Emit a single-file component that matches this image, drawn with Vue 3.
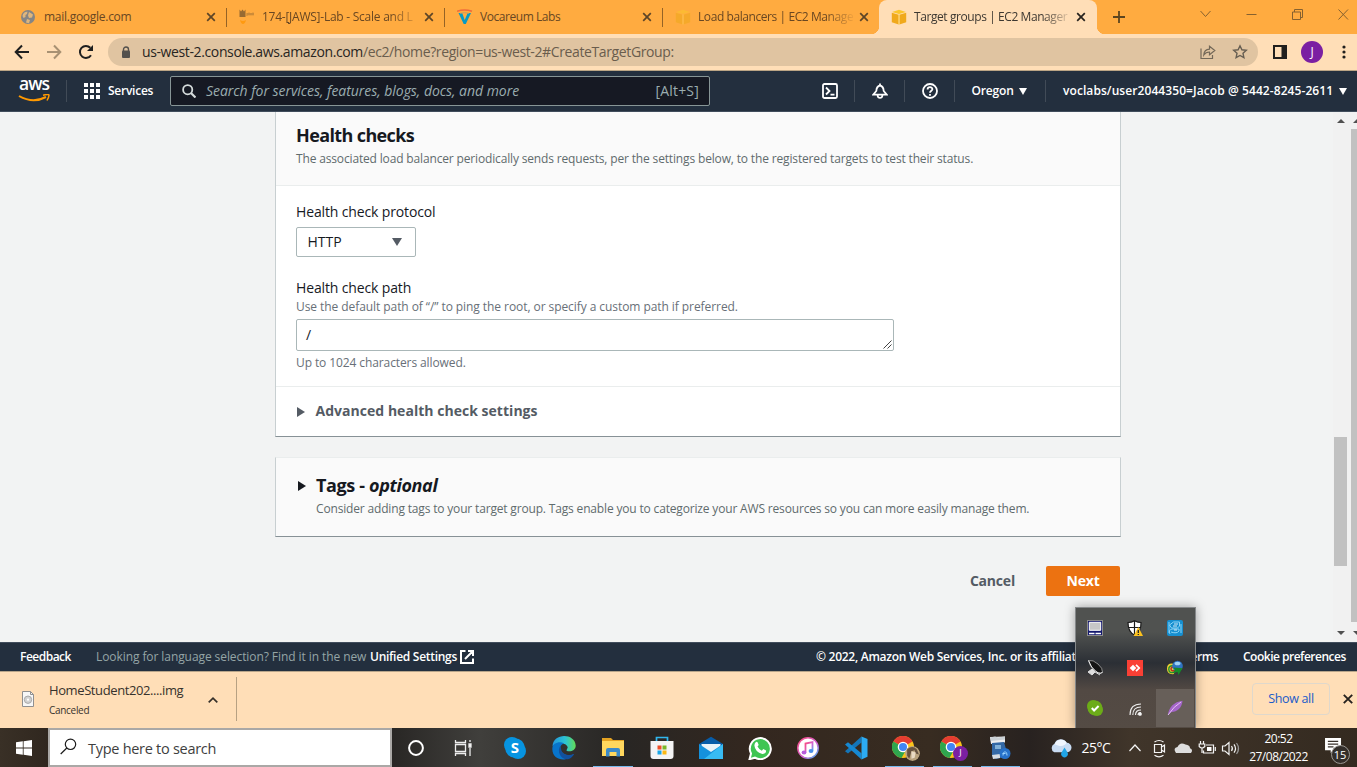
<script setup>
const tabs = [
  { kind: 'globe', title: 'mail.google.com', cls: 't1' },
  { kind: 'canvas', title: '174-[JAWS]-Lab - Scale and L', cls: 't2' },
  { kind: 'voc', title: 'Vocareum Labs', cls: 't3' },
  { kind: 'cube', title: 'Load balancers | EC2 Manage', cls: 't4' },
  { kind: 'cube', title: 'Target groups | EC2 Manager', cls: 't5' },
]
</script>

<template>
  <div class="screen">
    <header class="tabs">
      <div v-for="(t, i) in tabs" :key="i" class="tab" :class="[t.cls, { active: i === 4 }]">
        <svg v-if="t.kind === 'globe'" class="fav" viewBox="0 0 16 16"><circle cx="7" cy="8" r="7" fill="#858585" /><path d="M1.500 7C2 3.500 4.500 2.500 6.500 2.800L6 5 4.500 6V8L2.500 9zM8 3l4 2.500-1 3-3 .5-1-2.500zM6 10l3 1-1 3.200-3-.7z" fill="#e0b67c" /></svg>
        <svg v-else-if="t.kind === 'canvas'" class="fav" viewBox="0 0 16 16"><path d="M.5.500l1.500 2L3.500.500 5 2.500 6.500.500V8H.5z" fill="#7d5a2e" opacity=".8" /><path d="M8 4v3M10 3.500v3M12 4v2.500M14 3.500v3M8 5h7" stroke="#8f6530" stroke-width="1" opacity=".6" /><path d="M1 11q3 2 6 0-1 4-3 4t-3-4z" fill="#ff9a10" /></svg>
        <svg v-else-if="t.kind === 'voc'" class="fav" viewBox="0 0 16 16"><path d="M1.500 4h3.700l2.500 7L10.700 4H14L8.800 15H6.700z" fill="#079ac4" /><path d="M0 2.300Q7.500-.3 15 2.300" fill="none" stroke="#f06a3b" stroke-width="1.500" /><path d="M3 4.300Q7.500 3 12 4.300" stroke="#cf9a5a" stroke-width="1" fill="none" /></svg>
        <svg v-else class="fav" viewBox="0 0 16 16"><path d="M8 .8L15 3 8 5 1 3z" fill="#fbc52b" /><path d="M.8 3.700L7.700 5.700V15.500L.8 13.200zM8.400 5.700L15.200 3.700V13.200L8.400 15.500z" fill="#f0a91c" /><path d="M8 5.500v10" stroke="#ffd76c" stroke-width=".9" /></svg>
        <span class="title">{{ t.title }}</span>
        <svg class="x" viewBox="0 0 10 10"><path d="M1.200 1.200l7.600 7.600M8.800 1.200L1.200 8.800" stroke="currentColor" stroke-width="1.700" /></svg>
      </div>
      <svg class="plus" viewBox="0 0 12 12"><path d="M6 0v12M0 6h12" stroke="#5c451f" stroke-width="1.800" /></svg>
      <svg class="win" viewBox="0 0 150 14" fill="none" stroke="#86612f" stroke-width="1"><path d="M.5 4l5 5.500 5-5.500M46.500 7.500h10M92.500 5h8v7.500h-8zM94.500 5V2.500h8v8h-2M138.500 2.500l9.500 10M148 2.500L138.500 12.500" /></svg>
    </header>

    <div class="toolbar">
      <svg class="navs" viewBox="0 0 84 20" fill="none" stroke-width="2"><path d="M15 10H2M8 3.500L1.700 10 8 16.500" stroke="#1f1f1f" /><path d="M33 10h13M40 3.500L46.300 10 40 16.500" stroke="#a89173" /><path d="M77 13.200A6 6 0 1 1 76.300 5.800" stroke="#1f1f1f" /><path d="M79 3v6h-6z" fill="#1f1f1f" /></svg>
      <div class="omni">
        <svg class="lock" viewBox="0 0 10 13"><path d="M2.500 5V3.500a2.500 2.500 0 0 1 5 0V5" fill="none" stroke="#54514d" stroke-width="1.400" /><rect x="1" y="4.600" width="8" height="7.400" rx="1" fill="#54514d" /></svg>
        <span class="url"><b>us-west-2.console.aws.amazon.com</b>/ec2/home?region=us-west-2#CreateTargetGroup:</span>
        <svg class="share" viewBox="0 0 16 16" fill="none" stroke="#736858" stroke-width="1.200"><path d="M1 4.500V14.500H12.500V11" /><path d="M3.800 11C4 7 6.500 5.300 9.500 5.200V2.200L14.800 6.500 9.500 10.800V8C7 8 5.200 8.800 3.800 11z" /></svg>
        <svg class="star" viewBox="0 0 16 16"><path d="M8 1.800l1.900 4 4.400.5-3.300 3 .9 4.400L8 11.500l-3.900 2.200.9-4.400-3.300-3 4.400-.5z" fill="none" stroke="#665e52" stroke-width="1.400" /></svg>
      </div>
      <svg class="side" viewBox="0 0 14 14"><path fill-rule="evenodd" d="M0 0h14v14H0zM2 2v10h6.500V2z" fill="#211f1d" /></svg>
      <span class="avatar">J</span>
      <svg class="dots" viewBox="0 0 4 14" fill="#211f1d"><circle cx="2" cy="2" r="1.600" /><circle cx="2" cy="7" r="1.600" /><circle cx="2" cy="12" r="1.600" /></svg>
    </div>

    <nav class="aws">
      <div class="awslogo"><span>aws</span><svg viewBox="0 0 32 9"><path d="M1 2Q15 10 28 3" fill="none" stroke="#f90" stroke-width="2" /><path d="M25 1.200Q31-.3 31 1.300T29 6.500" fill="none" stroke="#f90" stroke-width="1.500" /></svg></div>
      <i class="sep s1"></i>
      <svg class="grid" viewBox="0 0 16 16" fill="#fff"><path d="M0 0h4v4H0zM6 0h4v4H6zM12 0h4v4h-4zM0 6h4v4H0zM6 6h4v4H6zM12 6h4v4h-4zM0 12h4v4H0zM6 12h4v4H6zM12 12h4v4h-4z" /></svg>
      <span class="services">Services</span>
      <div class="search">
        <svg viewBox="0 0 14 14" fill="none" stroke="#d5dbdb" stroke-width="1.800"><circle cx="5.700" cy="5.700" r="4.600" /><path d="M9 9l4.500 4.500" stroke-width="2.200" /></svg>
        <em>Search for services, features, blogs, docs, and more</em><span>[Alt+S]</span>
      </div>
      <svg class="shell" viewBox="0 0 16 16" fill="none" stroke="#fff" stroke-width="1.800"><rect x="1" y="1" width="14" height="14" rx="1.500" /><path d="M4 4.500L7.500 8 4 11.500M8.500 11.700h4" /></svg>
      <i class="sep"></i>
      <svg class="bell" viewBox="0 0 16 16" fill="none" stroke="#fff" stroke-width="1.800"><path d="M8 .5v2C5 3 4.500 5 4.300 8L1.200 11.700h13.600L11.700 8C11.500 5 11 3 8 2.500M5.600 12.500c.4 3.200 4.400 3.200 4.800 0" /></svg>
      <i class="sep"></i>
      <svg class="help" viewBox="0 0 16 16" fill="none" stroke="#fff" stroke-width="1.800"><circle cx="8" cy="8" r="7" /><path d="M5.600 6.500c0-3 4.800-3 4.800-.3 0 1.500-2.400 1.500-2.400 3.600M8 11v1.700" /></svg>
      <i class="sep"></i>
      <span class="oregon">Oregon</span><i class="down"></i>
      <i class="sep s5"></i>
      <span class="account">voclabs/user2044350=Jacob @ 5442-8245-2611</span><i class="down d2"></i>
    </nav>

    <main>
      <div class="content">
        <section class="panel health">
          <div class="phead">
            <h2>Health checks</h2>
            <p class="hdesc">The associated load balancer periodically sends requests, per the settings below, to the registered targets to test their status.</p>
          </div>
          <div class="pbody">
            <label class="l1">Health check protocol</label>
            <div class="select"><span>HTTP</span><i></i></div>
            <label class="l2">Health check path</label>
            <p class="hint h1">Use the default path of “/” to ping the root, or specify a custom path if preferred.</p>
            <div class="area"><span>/</span><svg viewBox="0 0 9 9"><path d="M.5 8.500l8-8M4.500 8.500l4-4" stroke="#444" stroke-width="1" /></svg></div>
            <p class="hint h3">Up to 1024 characters allowed.</p>
          </div>
          <div class="adv"><i class="right"></i><b>Advanced health check settings</b></div>
        </section>
        <section class="panel tags">
          <i class="right dark"></i>
          <div><h2>Tags - <em>optional</em></h2><p class="tdesc">Consider adding tags to your target group. Tags enable you to categorize your AWS resources so you can more easily manage them.</p></div>
        </section>
        <div class="actions"><span class="cancel">Cancel</span><span class="next">Next</span></div>
      </div>
      <div class="scroll inner"><i class="up"></i><i class="thumb"></i><i class="dn"></i></div>
      <div class="scroll outer"><i class="up"></i><i class="thumb"></i><i class="dn"></i></div>
    </main>

    <footer class="foot">
      <b class="feedback">Feedback</b>
      <span class="lang">Looking for language selection? Find it in the new</span>
      <b class="unified">Unified Settings</b>
      <svg viewBox="0 0 14 14" fill="none" stroke="#fff" stroke-width="2"><path d="M5.500 1H1v12h12V8.500M8 1h5v5M13 1L5 9" /></svg>
      <span class="copy">© 2022, Amazon Web Services, Inc. or its affiliates.</span>
      <span class="terms">Terms</span>
      <span class="cookie">Cookie preferences</span>
    </footer>

    <div class="downloads">
      <svg class="file" viewBox="0 0 12 16"><path d="M.5.500h8l3 3v12H.5z" fill="#f7f7f7" stroke="#909090" /><path d="M8.500.500v3h3" fill="none" stroke="#909090" /><circle cx="6" cy="8.700" r="3.700" fill="#d2d2d2" stroke="#aaa" /><circle cx="6" cy="8.700" r="1.100" fill="#fff" /></svg>
      <div class="fname"><span>HomeStudent202....img</span><small>Canceled</small></div>
      <svg class="chev" viewBox="0 0 10 6"><path d="M.7 5.300L5 1.200l4.300 4.100" fill="none" stroke="#35302a" stroke-width="1.700" /></svg>
      <i class="dsep"></i>
      <span class="showall">Show all</span>
      <svg class="dx" viewBox="0 0 10 10"><path d="M.8.800l8.400 8.400M9.200.800L.8 9.200" stroke="#26221e" stroke-width="1.900" /></svg>
    </div>

    <div class="taskbar">
      <svg class="start" viewBox="0 0 16 16" fill="#fff"><path d="M0 2.300l6.800-1V7.600H0zM7.600 1.200L16 0v7.600H7.600zM0 8.400h6.800v6.300L0 13.800zM7.600 8.400H16V16l-8.400-1.200z" /></svg>
      <div class="find"><svg viewBox="0 0 17 17" fill="none" stroke="#1b1b1b" stroke-width="1.200"><circle cx="10.500" cy="6.300" r="5.200" /><path d="M6.800 10L.7 16" /></svg><span>Type here to search</span></div>
      <div class="cell c1"><svg viewBox="0 0 24 24"><circle cx="12" cy="12" r="6.900" fill="none" stroke="#fff" stroke-width="2" /></svg></div>
      <div class="cell c2"><svg viewBox="0 0 24 24" fill="none" stroke="#eee" stroke-width="1.300"><path d="M4.500 4v2.500h10V4M4.500 20v-2.500h10V20M4.500 8.500h10v7h-10zM19 4v2M19 12v8" /><path d="M18 8h2v3h-2z" fill="#fff" /></svg></div>
      <div class="cell"><svg viewBox="0 0 24 24"><circle cx="9" cy="9" r="8" fill="#0794e1" /><circle cx="15" cy="15" r="8" fill="#0794e1" /><circle cx="12" cy="12" r="9.800" fill="#0794e1" /><text x="12" y="17.100" text-anchor="middle" fill="#fff" font-size="15" font-weight="700" font-family="Open Sans, sans-serif">S</text></svg></div>
      <div class="cell"><svg viewBox="0 0 24 24"><defs><linearGradient id="eg" x1="0" x2="1"><stop offset="0" stop-color="#2395dc" /><stop offset=".55" stop-color="#2cc3d4" /><stop offset="1" stop-color="#62dc55" /></linearGradient></defs><path d="M.5 10.500C1-3.500 23-3 23.700 9.500c.3 5.500-6.500 7-9.300 5l1.300-3C15 6.500 5 5.500 .5 10.500z" fill="url(#eg)" /><path d="M.3 13C.5 6.500 8 5 12 7.400c-4 1.200-4.500 5-2.500 8.100 3 4.500 8.500 4.500 12.500 2.500C17 26 .5 26 .3 13z" fill="#0874cb" /><path d="M8.500 9.700c-4 5.500 0 14 7.500 13.500 3-.8 4.800-2.800 6-5.200-5 2.400-11.500.2-12.500-3z" fill="#12519e" /></svg></div>
      <div class="cell open"><svg viewBox="0 0 24 24"><path d="M1 2h9l2 2h11v16H1z" fill="#e5a322" /><path d="M1 5h22v15H1z" fill="#ffd75e" /><path d="M5 20.500V14q0-2 2-2h10q2 0 2 2v6.500h-3.500V16h-7v4.500z" fill="#3b8ac9" /></svg></div>
      <div class="cell"><svg viewBox="0 0 24 24"><path d="M6.500 7V1.500h11V7" fill="none" stroke="#31b7ed" stroke-width="1.700" /><path d="M.5 5h23v15q0 3-3 3h-17q-3 0-3-3z" fill="#f4f4f4" /><path d="M7.500 9.500h4v4h-4z" fill="#ef4e27" /><path d="M12.500 9.500h4v4h-4z" fill="#79b729" /><path d="M7.500 14.500h4v4h-4z" fill="#1ba7e7" /><path d="M12.500 14.500h4v4h-4z" fill="#fbb812" /></svg></div>
      <div class="cell"><svg viewBox="0 0 24 24"><path d="M0 8L12 .8 24 8v3H0z" fill="#075ca8" /><path d="M2.500 8h19v8h-19z" fill="#e8f2f8" /><path d="M0 8l12 8 12-8v15H0z" fill="#1591dc" /><path d="M24 8v15H5z" fill="#38bbf3" /></svg></div>
      <div class="cell"><svg viewBox="0 0 24 24"><path d="M1.500 23.200L3 17.500A10.500 10.500 0 1 1 7 21.700z" fill="#3fc553" stroke="#fff" stroke-width="2" /><path d="M7.500 6.500q1.200-1.300 2.200 0l1 2.500-1.200 1.500q1.500 3 4.300 4.200l1.500-1.600 2.800 1.500q0 3.500-3.700 3.300Q7 16 6.400 9.500 6.500 7.500 7.500 6.500" fill="#fff" /></svg></div>
      <div class="cell n"><svg viewBox="0 0 24 24"><defs><linearGradient id="it" x1="0" y1="0" x2="1" y2="1"><stop stop-color="#fc4b7e" /><stop offset=".6" stop-color="#cf64d5" /><stop offset="1" stop-color="#3bb9f2" /></linearGradient></defs><circle cx="12" cy="12" r="10.200" fill="#fff" stroke="url(#it)" stroke-width="1.500" /><path d="M9.500 16.500V7.500l7-1.500v8.700" fill="none" stroke="url(#it)" stroke-width="1.800" /><ellipse cx="8" cy="16.500" rx="2.400" ry="1.900" fill="#b45cdc" /><ellipse cx="15" cy="15" rx="2.400" ry="1.900" fill="#4a8ee8" /></svg></div>
      <div class="cell n"><svg viewBox="0 0 24 24"><path d="M17.500.5v6L4 17.500l-3-2.300z" fill="#1475b8" /><path d="M1 8.500l3-2.300 13.500 11v6.300z" fill="#1688d2" /><path d="M17.500.5l6 2.600v17.700l-6 2.700z" fill="#2cabf2" /></svg></div>
      <div v-for="n in 2" :key="n" class="cell n open chrome"><svg viewBox="0 0 24 24"><circle cx="11" cy="11" r="11" fill="#fbc31b" /><path d="M11 11L1.400 5.500A11 11 0 0 1 20.500 5.500z" fill="#e53d31" /><path d="M11 11L1.400 5.500A11 11 0 0 0 9.500 21.900L14 14z" fill="#2fa64e" /><circle cx="11" cy="11" r="5.300" fill="#fff" /><circle cx="11" cy="11" r="4" fill="#4285f4" /></svg><span v-if="n === 2" class="badge">J</span><svg v-else class="badge face" viewBox="0 0 14 14"><circle cx="7" cy="7" r="7" fill="#b9a27e" /><path d="M2 3Q7-1 11 3l2 5-3-1-1-3-3 1-2 7-2-3z" fill="#665240" /><path d="M6 5l4 1-1 5-3 1z" fill="#eadac4" /></svg></div>
      <div class="cell n open"><svg viewBox="0 0 24 24"><path d="M2 1l15-.5v6L3 8z" fill="#eee" /><path d="M2 1.500l5-1 3 1 7-1v3L3 5z" fill="#cbd1d6" /><path d="M4 7l12-1 4 14-12 3-4-3z" fill="#3469a6" /><path d="M7 9h6v4H7z" fill="#82b1d8" /><path d="M4 19l8-1v4l-7 1z" fill="#d5dce3" /><circle cx="17" cy="17.500" r="5.500" fill="#2771ca" /><path d="M15 19.500c0-5 4-5 4 0M14.500 17.500h3" stroke="#9bd3ff" fill="none" /></svg></div>
      <svg class="weather" viewBox="0 0 24 22"><path d="M5.500 15.500a5 5 0 0 1 .2-9A7 7 0 0 1 18.500 5.500a5 5 0 0 1 0 10z" fill="#c9dcf3" /><path d="M6 7a7 7 0 0 1 12.500-1.500c-2 3-6 5-12.500 1.500" fill="#f0f6ff" /><path d="M16.200 10.500l3 5a3.500 3.500 0 1 1-6 0z" fill="#20a5e8" /></svg>
      <span class="temp">25°C</span>
      <svg class="tray" viewBox="0 0 120 22" fill="none" stroke="#f4f4f4" stroke-width="1.200"><path transform="translate(2 0)" d="M2.500 14L8 8l5.500 6M27.500 7.500h7v8h-7zM34.500 10l3-2v7l-3-2M27.500 5q4.500-3 9 0M27.500 18.300q4.500 3 9 0" /><path transform="translate(-2 0)" stroke="none" d="M53 16q-3.500-5 1.500-6 2.500-5.500 8-2.500 4.500.5 4.500 3.700 3.500 1.500 1 4.800z" fill="#ddd" /><g transform="translate(-2 0)"><path d="M80.500 13.500v2.500h10v-8h-7.500M77.500 4v3M80.500 4v3M76.200 7h5.600v2.500q-2.800 3-5.600 0zM79 11v5M92.300 10v4" /><path d="M84 10h4.500v4H84z" fill="#fff" stroke="none" /></g><path d="M97.500 9h2.500l4-3.500v12L100 14h-2.500zM106.500 9q1.800 2.500 0 5M109 7.300q3 4.200 0 8.400" /><path d="M111.500 6q4 5.500 0 11" stroke="#999" /></svg>
      <div class="clock"><span>20:52</span><span>27/08/2022</span></div>
      <div class="notif"><svg viewBox="0 0 18 17"><path d="M0 0h17v13H9l-3 3v-3H0z" fill="#fff" /><path d="M3 3.500h11M3 6.500h11M3 9.500h6" stroke="#3b332c" stroke-width="1.300" /></svg><span>15</span></div>
    </div>

    <div class="popup">
      <div><svg viewBox="0 0 16 16"><path d="M0 0h16v16H0z" fill="#8b8b8b" /><path d="M1 1h14v14H1z" fill="#13176f" /><path d="M2.300 2.300h11.400v8H2.300z" fill="#c7c7c7" stroke="#fff" /><path d="M2 13.500h5.500M8.500 13.500H14" stroke="#fff" stroke-width="1.500" /></svg></div>
      <div><svg viewBox="0 0 16 16"><path d="M7.500.700Q11 2.500 14 2.500C14.200 9 12 13 7.500 15 3 13 1 9 1 2.500 4.500 2.500 7.500.700 7.500.700z" fill="#fff" stroke="#1a1a1a" stroke-width="1.200" /><path d="M7.500 1v14M1 7.500h13" stroke="#1a1a1a" stroke-width="1.200" /><path d="M11.300 7L16 16H6.500z" fill="#fcc21e" /><path d="M11.300 10v3M11.300 14v1" stroke="#222" stroke-width="1.300" /></svg></div>
      <div><svg viewBox="0 0 16 16"><rect width="16" height="16" rx="2" fill="#168fd0" /><path d="M2.500 5l4-3h6v4l-2 2h-6zM3 14q-2-4 2-5h7v2q-2 3-8 1M14 4v9M2 2v11" fill="none" stroke="#8bd4f7" /><path d="M7 4h4M6 6h4M7 10h3" stroke="#fff" stroke-width=".8" /></svg></div>
      <div><svg viewBox="0 0 16 16"><path d="M1.500.5Q6-.5 11 4T15.500 12Q12 15 7 10T1.500.500z" fill="#151515" stroke="#aaa" stroke-width=".8" /><path d="M1.500.500Q4 8 9 11.500T15.500 12" fill="none" stroke="#eee" /><path d="M1 12l4-3 3 3-3 3zM8 12l5 3" fill="#ddd" stroke="#ddd" /></svg></div>
      <div><svg viewBox="0 0 16 16"><path d="M0 0h16v16H0z" fill="#fa4035" /><path d="M6 4.700L9.300 8 6 11.300 2.700 8z" fill="#fff" /><path d="M9 4.800L12.200 8 9 11.200" fill="none" stroke="#fff" stroke-width="1.700" /></svg></div>
      <div><svg viewBox="0 0 16 16"><path d="M8 4Q0 2 0 8.500T7 14z" fill="#eed22f" /><path d="M7 6Q1.500 5 1.800 9.500T8 12" fill="none" stroke="#2a8f30" stroke-width="1.500" /><path d="M8 7Q4 6.500 4 9t4 1.500" fill="none" stroke="#bc3025" stroke-width="1.500" /><circle cx="10.500" cy="6" r="5.300" fill="#2f73c1" /><ellipse cx="10.500" cy="3.500" rx="3" ry="1.800" fill="#9ed1f3" /><path d="M6.500 7.500l9 .8-4 6.700-1-3-5 1 2.500-3z" fill="#16892a" /></svg></div>
      <div><svg viewBox="0 0 16 16"><circle cx="6" cy="6" r="6" fill="#6cac18" /><circle cx="10" cy="10" r="6" fill="#6cac18" /><circle cx="8" cy="8" r="7.500" fill="#6cac18" /><path d="M4.800 8l2.300 2.500 4.500-4.500" fill="none" stroke="#fff" stroke-width="2" /></svg></div>
      <div><svg viewBox="0 0 16 16" fill="none" stroke="#eee" stroke-width="1.100"><path d="M3 15Q3 4 14 4M5.800 15Q5.800 7 14 7M8.500 15Q8.500 10 14 10M11 15q0-2.500 3-2.500" /><circle cx="13" cy="14" r="1.300" fill="#fff" /></svg></div>
      <div class="hl"><svg viewBox="0 0 16 16"><path d="M1 15C2 7 7 2 15.500.800 15 8 10 12 4.500 12z" fill="#a566ca" /><path d="M1 15Q7 6 14 2" stroke="#e4c3f4" fill="none" /></svg></div>
    </div>
  </div>
</template>

<style>
html, body { margin: 0; overflow: hidden; }
</style>
<style scoped>
* { box-sizing: border-box; }
svg { display: block; flex: none; }
i { display: block; flex: none; }
.screen { width: 1357px; height: 767px; position: relative; overflow: hidden; display: flex; flex-direction: column; font-family: "Open Sans", sans-serif; background: #f2f3f3; white-space: nowrap; }
.screen > * { flex: none; }
p, h2 { margin: 0; }

.tabs { height: 34px; background: #ffab40; display: flex; align-items: center; padding-left: 9px; }
.tab { width: 218px; height: 34px; display: flex; align-items: center; padding: 0 11px 0 12px; color: #694722; position: relative; flex: none; }
.tab:not(.active):not(.t4)::after { content: ""; position: absolute; right: 0; top: 8px; width: 1px; height: 19px; background: #956326; }
.t4 { width: 216px; padding-right: 10px; }
.t4 .fav { opacity: .6; }
.fav { width: 16px; height: 16px; margin-right: 7px; }
.title { width: 156px; font-size: 12px; line-height: 18px; margin-right: 4px; letter-spacing: -.27px; }
.t2 .title, .t4 .title, .t5 .title { mask-image: linear-gradient(90deg, #000 82%, rgba(0, 0, 0, .1)); }
.t2 .title { letter-spacing: -.25px; }
.t3 .title { letter-spacing: -.45px; }
.t4 .title { letter-spacing: -.42px; width: 155px; }
.t5 .title { letter-spacing: -.42px; }
.x { width: 10px; height: 10px; color: #5d4527; margin-left: auto; }
.active { background: #ffdeb7; border-radius: 8px 8px 0 0; color: #3d3831; }
.active .x { color: #26221e; }
.active::before { content: ""; position: absolute; left: -8px; bottom: 0; width: 8px; height: 8px; background: radial-gradient(circle at 0 0, transparent 8px, #ffdeb7 8.500px); }
.active::after { content: ""; position: absolute; right: -8px; bottom: 0; width: 8px; height: 8px; background: radial-gradient(circle at 100% 0, transparent 8px, #ffdeb7 8.500px); }
.plus { width: 12px; height: 12px; margin-left: 16px; }
.win { width: 150px; height: 14px; margin: -6px 0 0 74.500px; }

.toolbar { height: 37px; background: #ffdeb7; border-bottom: 1px solid #bba585; display: flex; align-items: center; padding-left: 14px; }
.navs { width: 84px; height: 20px; }
.omni { width: 1150px; height: 28px; margin-left: 10px; border-radius: 14px; background: #e0c4a1; display: flex; align-items: center; padding: 0 10px 0 13px; }
.lock { width: 10px; height: 13px; margin-right: 11px; }
.url { flex: 1; font-size: 14px; line-height: 20px; color: #6a5d4d; letter-spacing: -.38px; padding-bottom: 1px; }
.url b { font-weight: 400; color: #282522; }
.share, .star { width: 16px; height: 16px; margin-left: 16px; }
.side { width: 14px; height: 14px; margin-left: 15px; }
.avatar { width: 22px; height: 22px; border-radius: 50%; background: #7b1fa2; color: #fff; font-size: 12px; line-height: 21px; text-align: center; margin-left: 14px; }
.dots { width: 4px; height: 14px; margin-left: 19px; }

.aws { height: 41px; background: #232f3e; border-bottom: 1px solid #414d5c; display: flex; align-items: center; color: #fff; font-weight: 600; font-size: 12px; padding-left: 18px; }
.awslogo { width: 32px; font-size: 17.500px; line-height: 16px; height: 27px; font-weight: 600; letter-spacing: -.9px; margin-top: 2px; }
.awslogo span { display: block; height: 15px; margin: -4px 0 0 1px; }
.awslogo svg { width: 32px; height: 9px; margin-top: 4px; }
.sep { width: 1px; height: 22px; background: #414b57; }
.s1 { margin: 0 17px 0 16px; }
.grid { width: 16px; height: 16px; }
.services { width: 62px; margin-left: 8px; letter-spacing: -.25px; }
.services, .oregon, .account { padding-bottom: 1px; }
.search { width: 540px; height: 30px; border: 1px solid #879596; border-radius: 2px; background: #161923; display: flex; align-items: center; padding: 0 10px 0 11px; color: #9badb0; font-size: 14px; font-weight: 400; }
.search svg { width: 14px; height: 14px; }
.search em { margin-left: 10px; flex: 1; letter-spacing: -.04px; }
.search em, .search span { padding-bottom: 1px; }
.search span { letter-spacing: .2px; }
.shell, .bell, .help { width: 16px; height: 16px; }
.shell { margin: 0 16px 0 112px; }
.bell, .help { margin: 0 16.500px; }
.oregon { width: 43px; margin-left: 16.500px; letter-spacing: -.15px; }
.down { border: 4.500px solid transparent; border-top: 7px solid #fff; border-bottom: 0; margin-left: 4.500px; }
.s5 { margin: 0 17px 0 18px; }
.account { width: 271px; letter-spacing: .08px; }
.d2 { margin-left: 5px; }

main { height: 530px; display: flex; }
main > * { flex: none; }
.content { width: 846px; margin-left: 275px; }
.panel { border: 1px solid #c8cfd1; border-bottom: 1px solid #879196; }
.health { height: 325px; border-top: 0; background: #fff; }
.phead { height: 74px; background: #fafafa; border-bottom: 1px solid #eaeded; padding: 11px 20px; }
h2 { font-size: 18px; line-height: 24px; font-weight: 700; color: #16191f; letter-spacing: -.62px; }
.tags h2 { letter-spacing: -.37px; }
.phead p, .tags p { font-size: 12px; line-height: 16px; color: #5f6b6d; margin-top: 4px; }
.hdesc { letter-spacing: -.155px; }
.pbody { height: 201px; border-bottom: 1px solid #eaeded; padding: 16px 20px 0; }
label { display: block; font-size: 14px; line-height: 20px; color: #16191f; letter-spacing: -.14px; }
.select { width: 120px; height: 30px; border: 1px solid #aab7b8; border-radius: 2px; margin-top: 5px; display: flex; align-items: center; padding: 0 13px 1px 10.500px; font-size: 14px; color: #16191f; justify-content: space-between; }
.select i { border: 5px solid transparent; border-top: 8px solid #545b64; border-bottom: 0; margin-top: 1px; }
.l2 { margin-top: 21px; }
.hint { font-size: 12px; line-height: 16px; color: #687078; margin-top: 1px; letter-spacing: -.07px; }
.area { width: 598px; height: 32px; margin-top: 4px; border: 1px solid #aab7b8; border-radius: 2px; display: flex; justify-content: space-between; align-items: flex-end; padding: 0 1px 1px 9px; font-size: 14px; line-height: 28px; color: #16191f; }
.area svg { width: 9px; height: 9px; }
.h3 { margin-top: 4px; letter-spacing: -.1px; }
.adv { height: 49px; display: flex; align-items: center; padding-left: 21px; font-size: 14px; color: #545b64; }
.adv b { font-weight: 700; margin-left: 10.500px; letter-spacing: .03px; padding-bottom: 2px; }
.right { border: 5px solid transparent; border-left: 8px solid #545b64; border-right: 0; }
.right.dark { border-left-color: #16191f; margin-top: 23px; align-self: flex-start; }
.tags { height: 80px; margin-top: 20px; border-top-color: #eaeded; background: #fafafa; padding-left: 22px; display: flex; }
.tags div { margin: 15px 0 0 10px; }
.tdesc { letter-spacing: -.167px; }
.actions { display: flex; justify-content: flex-end; align-items: center; margin: 29px 1px 0 0; font-size: 14px; font-weight: 700; color: #545b64; letter-spacing: -.2px; }
.cancel { padding-bottom: 1px; }
.next { margin-left: 31px; width: 74px; height: 30px; line-height: 29px; text-align: center; border-radius: 2px; background: #ec7211; color: #fff; }
.scroll { display: flex; flex-direction: column; align-items: center; background: #f1f1f1; padding-top: 7px; height: 530px; }
.inner { width: 16px; margin-left: 211.500px; }
.outer { width: 16px; }
.up { border: 4px solid transparent; border-bottom: 4px solid #505050; border-top: 0; }
.dn { border: 4px solid transparent; border-top: 4px solid #505050; border-bottom: 0; }
.thumb { background: #c1c1c1; }
.inner .thumb { width: 13px; height: 129px; margin: 314px 0 65px; }
.outer .thumb { width: 12px; height: 493px; margin: 6px 0 9px; }

.foot { height: 30px; background: #232f3e; border-top: 1px solid #414d5c; border-bottom: 1px solid #b8a58a; display: flex; align-items: center; font-size: 12px; color: #fff; font-weight: 600; }
.foot > * { flex: none; }
.foot b { font-weight: 600; }
.foot b, .foot span { padding-bottom: 1px; }
.feedback { margin-left: 20px; width: 76px; letter-spacing: -.5px; }
.lang { width: 274px; color: #95a5a6; font-weight: 400; letter-spacing: -.08px; }
.unified { width: 90px; letter-spacing: -.28px; }
.foot svg { width: 14px; height: 14px; }
.copy { margin-left: 342px; width: 368px; letter-spacing: -.27px; }
.terms { width: 59px; letter-spacing: -.4px; }
.cookie { letter-spacing: -.5px; }

.downloads { height: 56px; background: #ffdeb7; display: flex; align-items: center; padding-left: 22px; }
.downloads > * { flex: none; }
.file { width: 12px; height: 16px; margin-top: -2px; }
.fname { width: 158px; margin: 0 0 0 15px; display: flex; flex-direction: column; color: #37322c; font-size: 13px; line-height: 20px; letter-spacing: -.4px; }
.fname small { font-size: 10px; line-height: 20px; letter-spacing: -.3px; }
.chev { width: 10px; height: 6px; margin-left: 1px; }
.dsep { width: 1px; height: 44px; background: #b7a183; margin: -2px 1015px 0 18px; }
.showall { width: 78px; height: 32px; line-height: 30px; border: 1px solid #dfd8cc; border-radius: 4px; text-align: center; font-size: 12.500px; letter-spacing: -.35px; color: #1a5bc9; margin-top: -2px; }
.dx { width: 10px; height: 10px; margin: -2px 0 0 13px; }

.taskbar { height: 39px; background: linear-gradient(90deg, #393026 0, #30271f 48px, #282624 390px, #403f3c 480px, #282624 620px, #33271f 750px, #382c21 930px, #282220 1030px, #40352a 1130px, #342a20 1357px); display: flex; align-items: center; padding-left: 16px; color: #fff; position: relative; }
.taskbar > * { flex: none; }
.start { width: 16px; height: 16px; }
.find { width: 344px; height: 39px; margin-left: 16px; background: #fff; border: 2px solid #aaa8a6; display: flex; align-items: center; padding-left: 10px; color: #3e3e3e; font-size: 14.500px; letter-spacing: -.28px; }
.find svg { width: 17px; height: 17px; margin: -2px 11px 0 0; }
.find span { padding-top: 1px; }
.cell { width: 49px; height: 39px; display: flex; align-items: center; justify-content: center; position: relative; }
.cell > svg { width: 24px; height: 24px; }
.cell.c1 { margin-left: -1px; }
.cell.c2 { width: 46px; margin-right: 4px; }
.cell.n { width: 48px; }
.open::after { content: ""; position: absolute; left: 4.500px; right: 4.500px; bottom: 0; height: 1px; background: #76b9ed; }
.badge { position: absolute; left: 25px; top: 18px; width: 15px; height: 15px; border-radius: 50%; background: #7b1fa2; font-size: 9px; line-height: 14px; text-align: center; }
.cell > .face { width: 15px; height: 15px; background: none; }
.weather { width: 23px; height: 22px; margin-left: 25px; }
.temp { width: 43px; margin-left: 9.500px; font-size: 14px; letter-spacing: -.5px; }
.tray { width: 120px; height: 22px; }
.clock { width: 70px; display: flex; flex-direction: column; align-items: center; font-size: 12px; line-height: 18px; letter-spacing: -.5px; margin-left: -1px; }
.notif { position: relative; margin-left: 11px; }
.notif svg { width: 17px; height: 16px; margin-top: -3px; }
.notif span { position: absolute; left: 6px; top: 4px; width: 19px; height: 19px; border: 1px solid #9a9792; border-radius: 50%; background: #332e2a; font-size: 11px; line-height: 17px; text-align: center; }

.popup { position: absolute; left: 1075px; top: 607px; width: 121px; height: 121px; background: linear-gradient(#505250 0, #505250 24px, #2b2f35 55px, #524943 82px, #544b44 100%); border: 1px solid #85888a; border-bottom: 0; box-shadow: 0 0 10px rgba(0, 0, 0, .35); display: grid; grid-template: repeat(3, 40px) / 38px 41px 40px; clip-path: inset(-15px -15px 0 -15px); }
.popup div { display: flex; align-items: center; justify-content: center; }
.popup svg { width: 16px; height: 16px; }
.popup .hl { background: #675f59; margin: 1px; }
</style>
